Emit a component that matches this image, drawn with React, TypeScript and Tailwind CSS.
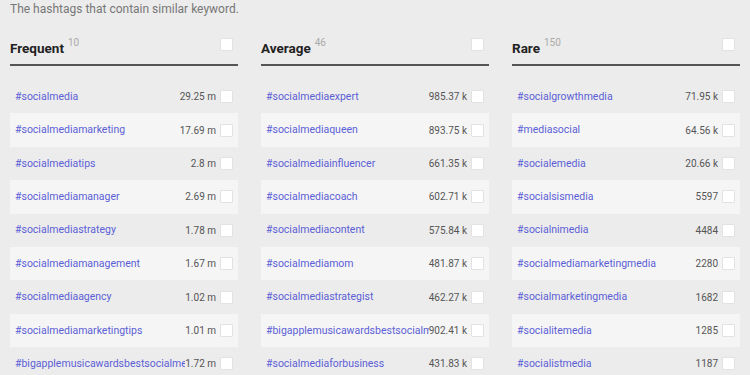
import React from "react";

type Row = [string, string];

const columns: { title: string; count: number; rows: Row[] }[] = [
  {
    title: "Frequent",
    count: 10,
    rows: [
      ["#socialmedia", "29.25 m"],
      ["#socialmediamarketing", "17.69 m"],
      ["#socialmediatips", "2.8 m"],
      ["#socialmediamanager", "2.69 m"],
      ["#socialmediastrategy", "1.78 m"],
      ["#socialmediamanagement", "1.67 m"],
      ["#socialmediaagency", "1.02 m"],
      ["#socialmediamarketingtips", "1.01 m"],
      ["#bigapplemusicawardsbestsocialmedia", "1.72 m"],
    ],
  },
  {
    title: "Average",
    count: 46,
    rows: [
      ["#socialmediaexpert", "985.37 k"],
      ["#socialmediaqueen", "893.75 k"],
      ["#socialmediainfluencer", "661.35 k"],
      ["#socialmediacoach", "602.71 k"],
      ["#socialmediacontent", "575.84 k"],
      ["#socialmediamom", "481.87 k"],
      ["#socialmediastrategist", "462.27 k"],
      ["#bigapplemusicawardsbestsocialmedia", "902.41 k"],
      ["#socialmediaforbusiness", "431.83 k"],
    ],
  },
  {
    title: "Rare",
    count: 150,
    rows: [
      ["#socialgrowthmedia", "71.95 k"],
      ["#mediasocial", "64.56 k"],
      ["#socialemedia", "20.66 k"],
      ["#socialsismedia", "5597"],
      ["#socialnimedia", "4484"],
      ["#socialmediamarketingmedia", "2280"],
      ["#socialmarketingmedia", "1682"],
      ["#socialitemedia", "1285"],
      ["#socialistmedia", "1187"],
    ],
  },
];

function Box() {
  return <div className="w-[13px] h-[13px] shrink-0 bg-white border border-[#e2e2e2] rounded-[1px]" />;
}

export default function App() {
  return (
    <div className="w-[750px] h-[375px] overflow-hidden bg-[#ececec] font-['Roboto',sans-serif] px-[10px]">
      <div className="h-[19px] leading-[19px] text-[12px] text-[#777]">
        The hashtags that contain similar keyword.
      </div>
      <div className="flex gap-[23px]">
        {columns.map((col) => (
          <div key={col.title} className="w-[228px] shrink-0">
            <div className="h-[47px] flex items-end justify-between border-b-2 border-[#555] pb-[8px]">
              <div className="flex items-start leading-[16px]">
                <span className="text-[13.5px] font-bold text-[#222]">{col.title}</span>
                <span className="text-[10px] leading-[10px] text-[#aaa] ml-[4px] -mt-[2px]">{col.count}</span>
              </div>
              <div className="mb-[5px] mr-[5px]">
                <Box />
              </div>
            </div>
            <div className="mt-[14px]">
              {col.rows.map(([tag, n], i) => (
                <div
                  key={tag + i}
                  className={`h-[33.4px] flex items-center pl-[5px] pr-[5px] ${i % 2 === 1 ? "bg-[#f5f5f5]" : ""}`}
                >
                  <div className="flex-1 min-w-0 overflow-hidden whitespace-nowrap text-[10.5px] text-[#5c5fd6]">
                    {tag}
                  </div>
                  <div className="shrink-0 text-[10px] text-[#555] pr-[4px]">{n}</div>
                  <Box />
                </div>
              ))}
            </div>
          </div>
        ))}
      </div>
    </div>
  );
}
